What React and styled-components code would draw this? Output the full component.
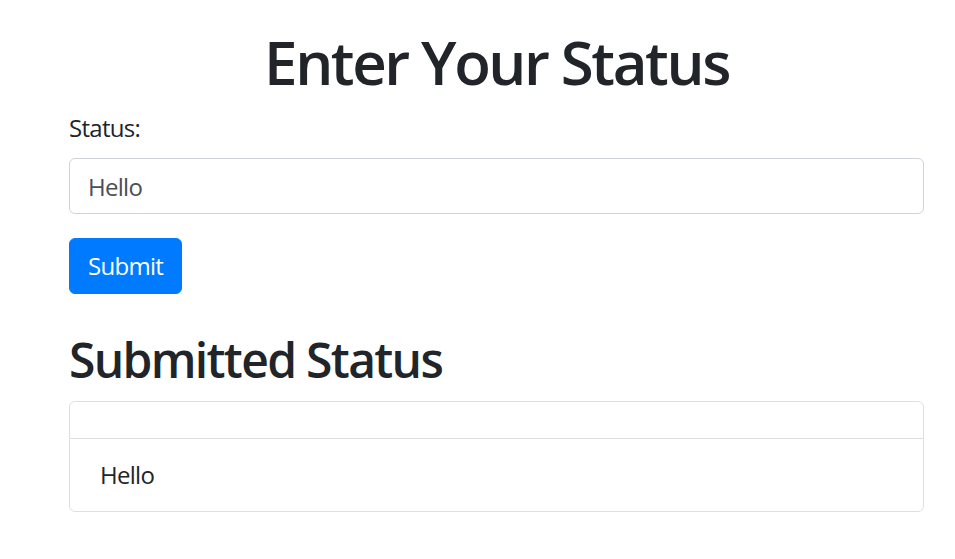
import React, { useState } from 'react'
import styled, { createGlobalStyle } from 'styled-components'

const GlobalStyle = createGlobalStyle`
  * {
    box-sizing: border-box;
  }
  body {
    margin: 0;
    background: #fff;
    color: #212529;
    font-family: 'Open Sans', 'Liberation Sans', sans-serif;
    font-size: 24px;
    line-height: 1.5;
  }
`

const Page = styled.main`
  width: 855px;
  margin-left: 69px;
  padding-top: 26px;
`

const Title = styled.h1`
  margin: 0 0 12px;
  font-size: 60px;
  font-weight: 600;
  line-height: 1.2;
  text-align: center;
  letter-spacing: -0.04em;
`

const Form = styled.form`
  display: flex;
  flex-direction: column;
  align-items: flex-start;
`

const FormGroup = styled.div`
  align-self: stretch;
  margin-bottom: 24px;
`

const Label = styled.label`
  display: block;
  margin-bottom: 12px;
  letter-spacing: -0.03em;
`

const Input = styled.input`
  display: block;
  width: 100%;
  height: 56px;
  padding: 9px 18px;
  font: inherit;
  letter-spacing: -0.03em;
  color: #495057;
  background: #fff;
  border: 1px solid #ced4da;
  border-radius: 6px;
  outline: none;
`

const Button = styled.button`
  height: 56px;
  padding: 9px 18px;
  font: inherit;
  letter-spacing: -0.03em;
  color: #fff;
  background: #007bff;
  border: 1px solid #007bff;
  border-radius: 6px;
  cursor: pointer;
`

const SubTitle = styled.h2`
  margin: 37px 0 12px;
  font-size: 48px;
  font-weight: 600;
  line-height: 1.2;
  letter-spacing: -0.035em;
`

const Card = styled.section`
  border: 1px solid rgba(0, 0, 0, 0.125);
  border-radius: 6px;
  overflow: hidden;
`

const CardHeader = styled.div`
  min-height: 37px;
  padding: 18px 30px;
  border-bottom: 1px solid rgba(0, 0, 0, 0.125);
`

const ListItem = styled.div`
  padding: 18px 30px;
  letter-spacing: -0.03em;
`

export default function App() {
  const [value, setValue] = useState('Hello')
  const [submitted, setSubmitted] = useState(['Hello'])

  const handleSubmit = e => {
    e.preventDefault()
    setSubmitted([value])
  }

  return (
    <Page>
      <GlobalStyle />
      <Title>Enter Your Status</Title>
      <Form onSubmit={handleSubmit}>
        <FormGroup>
          <Label htmlFor="status">Status:</Label>
          <Input
            id="status"
            value={value}
            onChange={e => setValue(e.target.value)}
          />
        </FormGroup>
        <Button type="submit">Submit</Button>
      </Form>
      <SubTitle>Submitted Status</SubTitle>
      <Card>
        <CardHeader />
        {submitted.map((s, i) => (
          <ListItem key={i}>{s}</ListItem>
        ))}
      </Card>
    </Page>
  )
}
